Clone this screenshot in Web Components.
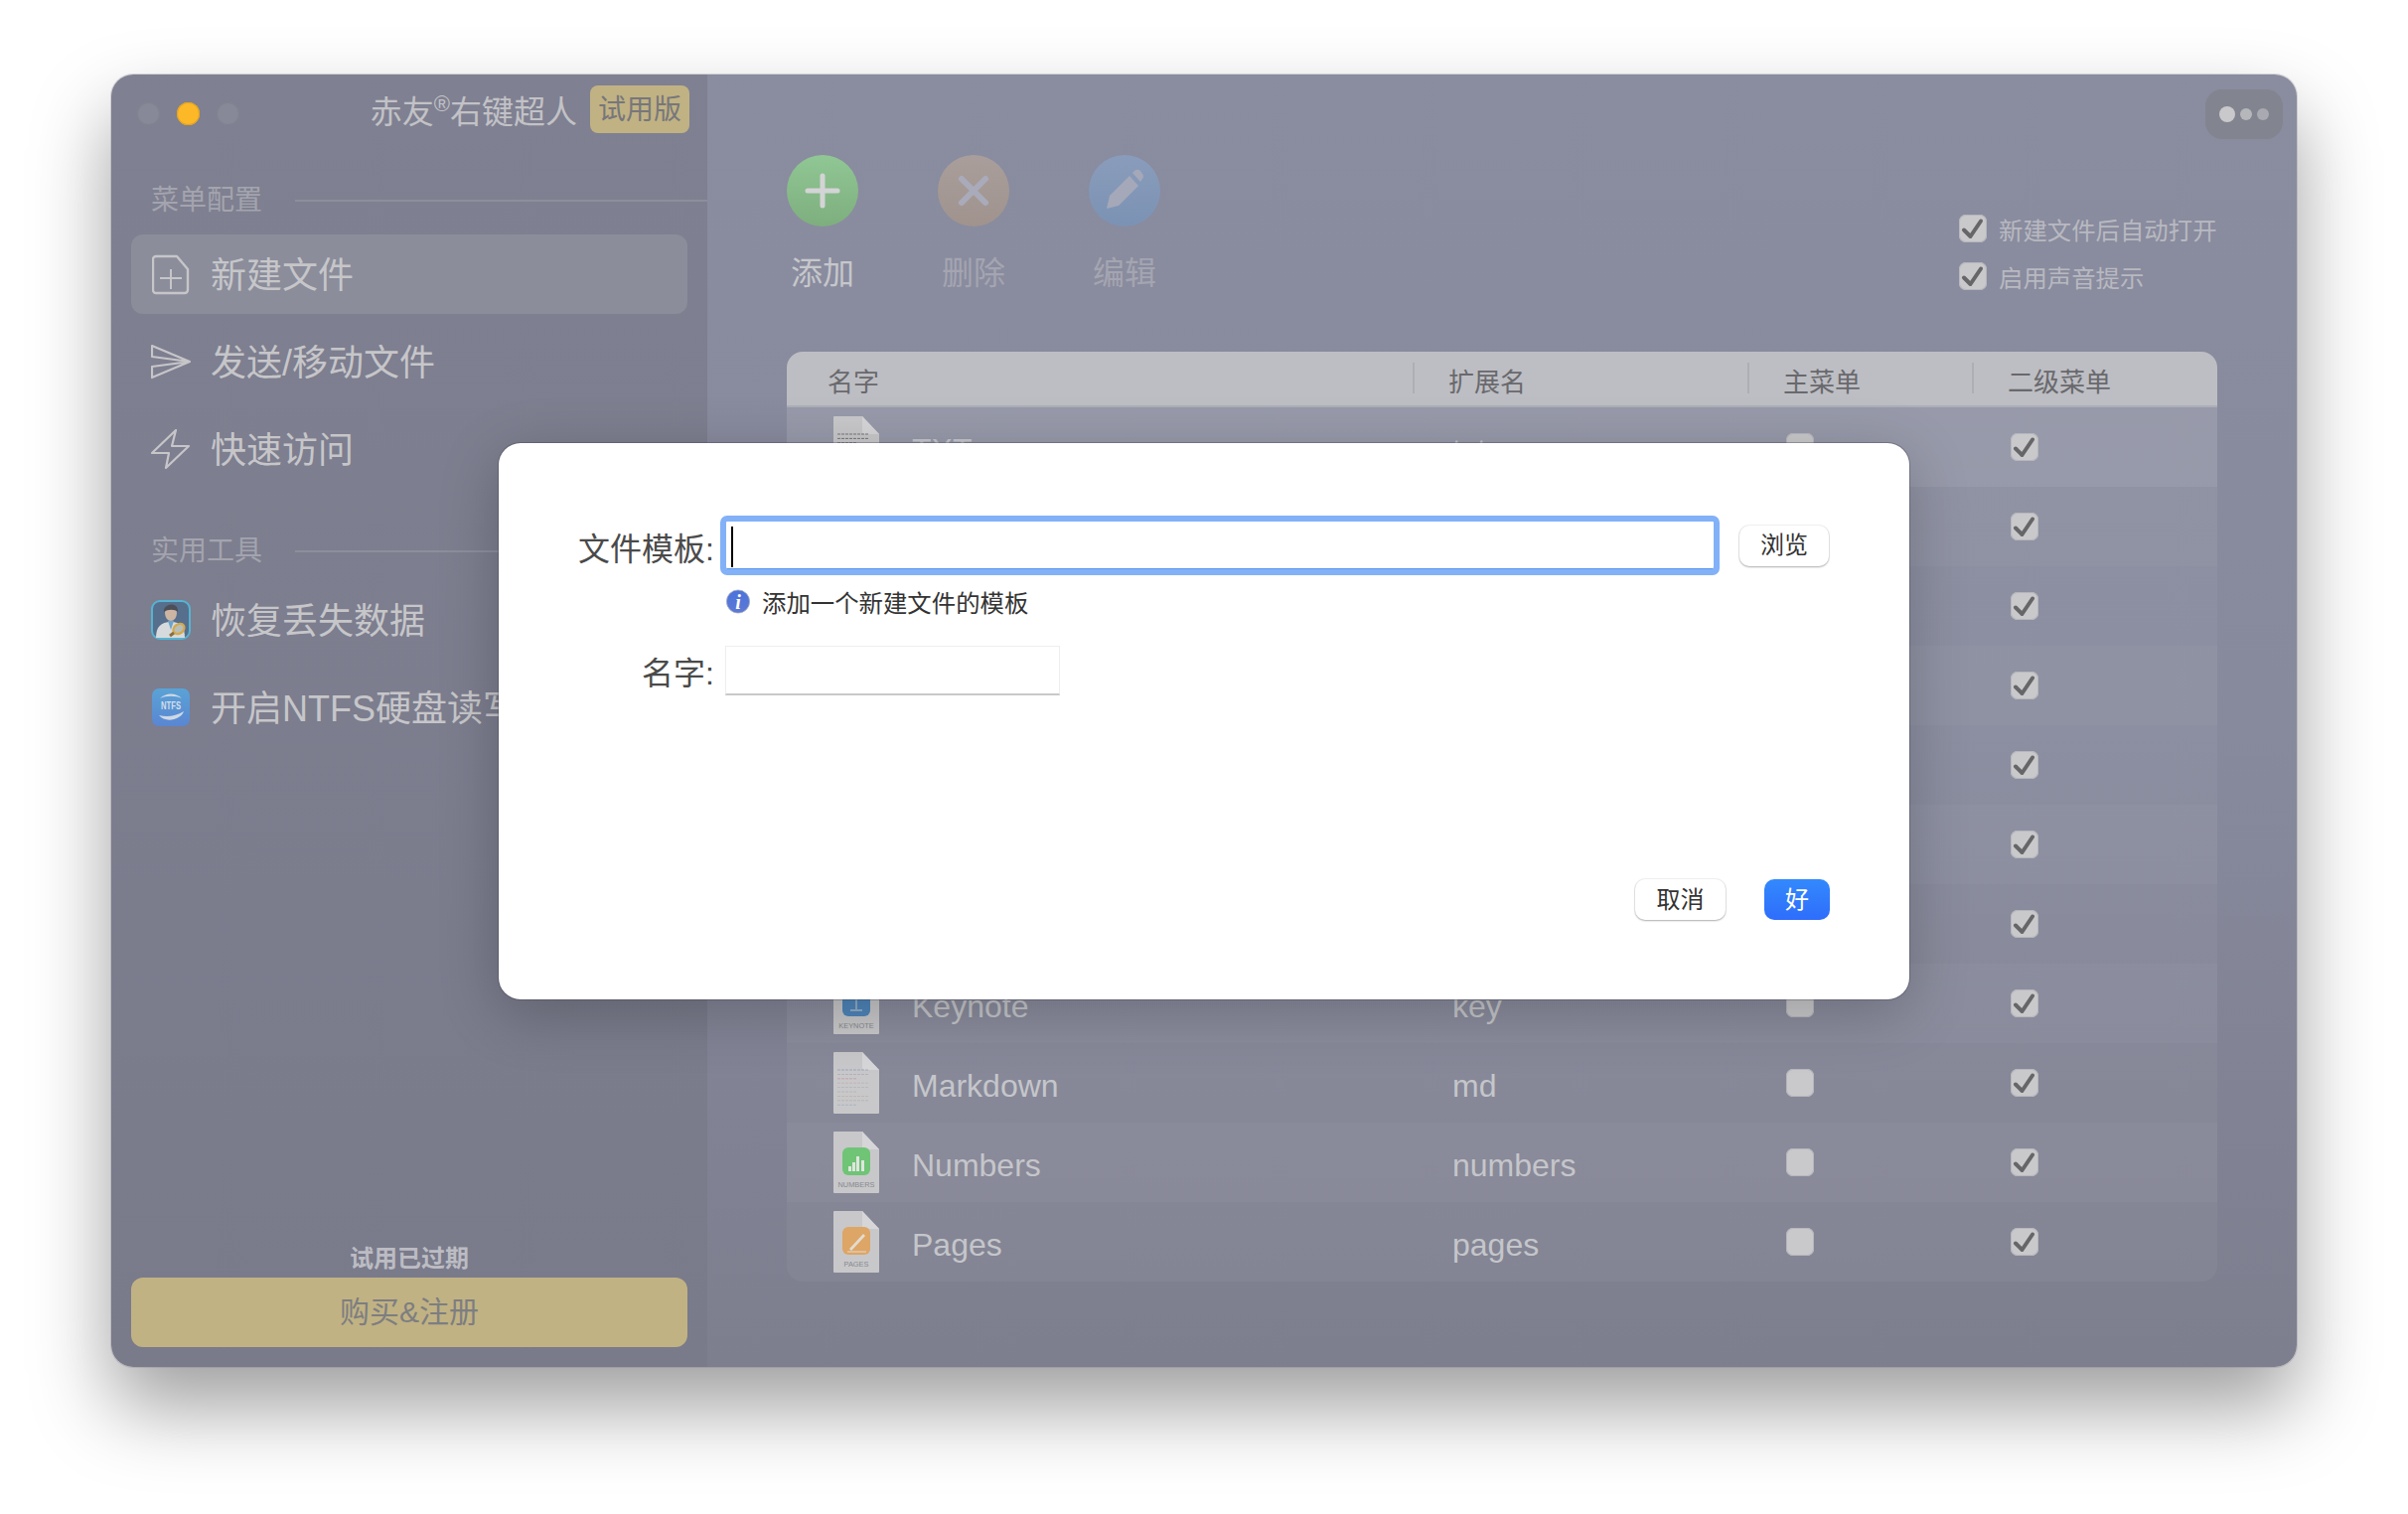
<!DOCTYPE html>
<html lang="zh">
<head>
<meta charset="utf-8">
<title>赤友右键超人</title>
<style>
    html, body { margin: 0; background: #fff; }
    body {
        width: 2424px;
        height: 1524px;
        overflow: hidden;
        box-sizing: border-box;
        padding: 75px 112px 0;
        font-family: "Liberation Sans", "Noto Sans CJK SC", sans-serif;
    }
</style>
</head>
<body>
<app-window></app-window>
<script>
const CHECK = `<svg width="28" height="28" viewBox="0 0 28 28"><path d="M5 15.5l6.5 6.5L22 6.5" fill="none" stroke="var(--tick, #666668)" stroke-width="4" stroke-linecap="round" stroke-linejoin="round"/></svg>`;

class MacCheck extends HTMLElement {
    constructor() {
        super();
        this.attachShadow({ mode: 'open' });
        this.shadowRoot.innerHTML = `
            <style>
                :host {
                    display: block;
                    width: 28px;
                    height: 28px;
                    flex: none;
                    box-sizing: border-box;
                    border-radius: 7px;
                    background: #c9c9cb;
                    box-shadow: inset 0 0 0 1px #b6b7bd;
                }
                svg { display: block; }
            </style>
            ${this.hasAttribute('checked') ? CHECK : ''}
        `;
    }
}
customElements.define('mac-check', MacCheck);

class NavItem extends HTMLElement {
    constructor() {
        super();
        this.attachShadow({ mode: 'open' });
        this.shadowRoot.innerHTML = `
            <style>
                :host {
                    display: flex;
                    align-items: center;
                    gap: 20px;
                    height: 80px;
                    padding-left: 20px;
                    border-radius: 12px;
                    font-size: 36px;
                    color: #c6c6c9;
                    white-space: nowrap;
                }
                :host([selected]) { background: #8b8d9b; }
                .icon { width: 40px; height: 42px; display: flex; align-items: center; justify-content: center; flex: none; }
                .text { padding-bottom: 4px; }
            </style>
            <span class="icon"><slot name="icon"></slot></span>
            <span class="text"><slot></slot></span>
        `;
    }
}
customElements.define('nav-item', NavItem);

class SectionLabel extends HTMLElement {
    constructor() {
        super();
        this.attachShadow({ mode: 'open' });
        this.shadowRoot.innerHTML = `
            <style>
                :host {
                    display: flex;
                    align-items: center;
                    gap: 33px;
                    height: 40px;
                    padding-left: 20px;
                    margin-right: -20px;
                    font-size: 28px;
                    color: #a3a4ae;
                    white-space: nowrap;
                }
                span { padding-bottom: 3px; }
                i { flex: 1; height: 2px; background: #8d8e9c; margin-top: 4px; }
            </style>
            <span><slot></slot></span><i></i>
        `;
    }
}
customElements.define('section-label', SectionLabel);

class SideBar extends HTMLElement {
    constructor() {
        super();
        this.attachShadow({ mode: 'open' });
        this.shadowRoot.innerHTML = `
            <style>
                :host {
                    display: flex;
                    flex-direction: column;
                    width: 600px;
                    flex: none;
                    box-sizing: border-box;
                    padding: 0 20px 20px;
                    background: linear-gradient(#7f8091, #797a8a);
                }
                .title-bar { display: flex; align-items: center; height: 78px; margin-right: -2px; }
                .lights { display: flex; gap: 17px; margin-left: 6px; }
                .lights i { width: 23px; height: 23px; border-radius: 50%; background: #878998; box-shadow: inset 0 0 0 1px #80828f; }
                .lights i.on { background: #fcb827; box-shadow: inset 0 0 0 1px #e2a41f; }
                .title { margin-left: auto; font-size: 32px; color: #c2c2c6; white-space: nowrap; margin-right: 13px; margin-bottom: 8px; }
                .title sup { font-size: 22px; line-height: 0; vertical-align: 12px; }
                .badge {
                    width: 100px;
                    height: 48px;
                    margin-bottom: 8px;
                    border-radius: 8px;
                    background: #c1b283;
                    color: #77777b;
                    font-size: 28px;
                    line-height: 50px;
                    text-align: center;
                }
                .first { margin-top: 27px; margin-bottom: 16px; }
                .second { margin-top: 41px; margin-bottom: 11px; }
                .list { display: flex; flex-direction: column; gap: 8px; }
                .list svg { display: block; }
                .footer { margin-top: auto; }
                .expired { font-size: 24px; font-weight: 700; line-height: 32px; color: #bcbcc3; text-align: center; margin-bottom: 3px; }
                .buy {
                    height: 70px;
                    border-radius: 12px;
                    background: #c1b283;
                    color: #7d7e81;
                    font-size: 30px;
                    line-height: 70px;
                    text-align: center;
                }
            </style>
            <div class="title-bar">
                <div class="lights"><i></i><i class="on"></i><i></i></div>
                <div class="title">赤友<sup>®</sup>右键超人</div>
                <div class="badge">试用版</div>
            </div>
            <section-label class="first">菜单配置</section-label>
            <div class="list">
                <nav-item selected>
                    <svg slot="icon" width="38" height="41" viewBox="0 0 38 41" fill="none" stroke="#c6c6c9" stroke-width="2.4" stroke-linejoin="round"><path d="M4 2h21l11 13v21a3 3 0 0 1-3 3H4a3 3 0 0 1-3-3V5a3 3 0 0 1 3-3z"/><path d="M19 15v20M8 24h22" stroke-width="2"/></svg>
                    新建文件
                </nav-item>
                <nav-item>
                    <svg slot="icon" width="40" height="36" viewBox="0 0 40 36" fill="none" stroke="#c6c6c9" stroke-width="2.2" stroke-linejoin="round"><path d="M1 2l38 16L1 34V23l38-5L1 13z"/></svg>
                    发送/移动文件
                </nav-item>
                <nav-item>
                    <svg slot="icon" width="40" height="42" viewBox="0 0 40 42" fill="none" stroke="#c6c6c9" stroke-width="2.2" stroke-linejoin="round"><path d="M25 2L1 25h17l-3 15 23-22H21z"/></svg>
                    快速访问
                </nav-item>
            </div>
            <section-label class="second">实用工具</section-label>
            <div class="list">
                <nav-item>
                    <svg slot="icon" width="40" height="40" viewBox="0 0 40 40">
                        <rect x="1" y="1" width="38" height="38" rx="8" fill="#566f8c" stroke="#55b4d2" stroke-width="2"/>
                        <path d="M5 38c0-11 5-16 15-16s14 5 14 16z" fill="#d7dadd"/>
                        <path d="M17 21l3 9 3-9z" fill="#6da3cc"/>
                        <ellipse cx="20" cy="13" rx="6" ry="8" fill="#cdb5a3"/>
                        <path d="M13 12c-1-9 15-11 14 0-3-3-10-3-14 0z" fill="#4c4f58"/>
                        <ellipse cx="28" cy="29" rx="6" ry="4.6" transform="rotate(-35 28 29)" fill="#b7bfb8" stroke="#d4a94d" stroke-width="2.2"/>
                        <path d="M23 33l-4 3" stroke="#8a6f3d" stroke-width="3"/>
                    </svg>
                    恢复丢失数据
                </nav-item>
                <nav-item>
                    <svg slot="icon" width="38" height="38" viewBox="0 0 38 38">
                        <defs><linearGradient id="ntfs" x1="0" y1="0" x2="0" y2="1"><stop offset="0" stop-color="#5aa3d6"/><stop offset="1" stop-color="#5a86d2"/></linearGradient></defs>
                        <rect width="38" height="38" rx="7" fill="url(#ntfs)"/>
                        <path d="M8 10c6-6 16-6 22 0-6-3-16-3-22 0zM7 27c8 2 17 1 25-4-3 9-19 12-25 4z" fill="#cfd8e4"/>
                        <text x="19" y="21" text-anchor="middle" font-family="Liberation Sans" font-size="10" font-weight="700" textLength="20" lengthAdjust="spacingAndGlyphs" fill="#d5dde8">NTFS</text>
                    </svg>
                    开启NTFS硬盘读写
                </nav-item>
            </div>
            <div class="footer">
                <div class="expired">试用已过期</div>
                <div class="buy">购买&amp;注册</div>
            </div>
        `;
    }
}
customElements.define('side-bar', SideBar);

class ToolButton extends HTMLElement {
    constructor() {
        super();
        this.attachShadow({ mode: 'open' });
        this.shadowRoot.innerHTML = `
            <style>
                :host {
                    display: flex;
                    flex-direction: column;
                    align-items: center;
                    width: 72px;
                    gap: 25px;
                    font-size: 32px;
                    line-height: 44px;
                    white-space: nowrap;
                    color: var(--label, #a4a5b1);
                }
                .disc { display: block; width: 72px; height: 72px; border-radius: 50%; }
                svg { display: block; }
            </style>
            <span class="disc" style="background: ${this.getAttribute('disc')}"><slot name="glyph"></slot></span>
            <slot></slot>
        `;
    }
}
customElements.define('tool-button', ToolButton);

class FileIcon extends HTMLElement {
    set kind(value) {
        this._kind = value;
        this.render();
    }

    constructor() {
        super();
        this.attachShadow({ mode: 'open' });
    }

    render() {
        const apps = {
            keynote: { color: '#4f86bb', label: 'KEYNOTE', art: '<path d="M23 20v17M17 38h12" stroke="#a8bdd0" stroke-width="1.4" fill="none"/>' },
            numbers: { color: '#6fc476', label: 'NUMBERS', art: '<path d="M18 35h3v5h-3zM22 31h3v9h-3zM26 25h3v15h-3zM31 29h3v11h-3z" transform="translate(-3 0)" fill="#dfe6de"/>' },
            pages: { color: '#dda566', label: 'PAGES', art: '<path d="M16 38l14-15 2 2-14 15z" fill="#e3dccf"/><path d="M14 41h19" stroke="#e3dccf" stroke-width="1"/>' }
        };
        const app = apps[this._kind];
        let inner = '';
        if (app) {
            inner = `<rect x="9" y="16" width="28" height="28" rx="6" fill="${app.color}"/>${app.art}
                <text x="23" y="55.5" text-anchor="middle" font-family="Liberation Sans" font-size="7.4" fill="#87888c">${app.label}</text>`;
        } else {
            const isMd = this._kind === 'md';
            const colors = isMd
                ? ['#7f86b8', '#9a9ab0', '#c77f86', '#b9a8a8', '#a8a8ae', '#a8a8ae', '#b5a88f', '#a8a8ae', '#8fa2b8']
                : ['#77777a', '#77777a', '#77777a', '#77777a', '#77777a', '#77777a', '#77777a', '#77777a', '#77777a'];
            inner = colors.map((c, i) => `<path d="M4 ${18 + i * 4.4}h${i % 3 === 2 ? 20 : 32}" stroke="${c}" stroke-width="${isMd ? 0.7 : 1}" stroke-dasharray="3 1" opacity="${isMd ? 0.75 : 1}"/>`).join('');
        }
        this.shadowRoot.innerHTML = `
            <style>
                :host { display: block; width: 46px; height: 62px; flex: none; }
                svg { display: block; }
            </style>
            <svg width="46" height="62" viewBox="0 0 46 62">
                <path d="M1 0h28l17 18v43a1 1 0 0 1-1 1H1a1 1 0 0 1-1-1V1a1 1 0 0 1 1-1z" fill="#c8c8ca"/>
                <path d="M29 0l17 18H32a3 3 0 0 1-3-3z" fill="#d6d6d8"/>
                ${inner}
            </svg>
        `;
    }
}
customElements.define('file-icon', FileIcon);

class FileRow extends HTMLElement {
    constructor() {
        super();
        this.attachShadow({ mode: 'open' });
    }

    set file(value) {
        this._file = value;
        this.render();
    }

    render() {
        if (!this._file) return;
        const f = this._file;
        this.shadowRoot.innerHTML = `
            <style>
                :host {
                    display: grid;
                    grid-template-columns: 630px 337px 226px 247px;
                    align-items: center;
                    height: 80px;
                    font-size: 32px;
                    color: #c5c6ca;
                    background: rgba(255, 255, 255, 0.045);
                }
                :host(:nth-child(even)) { background: rgba(255, 255, 255, 0.07); }
                :host([selected]) { background: rgba(255, 255, 255, 0.13); }
                .name { display: flex; align-items: center; gap: 33px; padding-left: 47px; }
                .name span { padding-top: 6px; }
                .ext { padding-left: 40px; padding-top: 6px; }
                .box { padding-left: 39px; }
            </style>
            <div class="name">${f.kind ? '<file-icon></file-icon>' : ''}<span>${f.name || ''}</span></div>
            <div class="ext">${f.ext || ''}</div>
            <div class="box"><mac-check></mac-check></div>
            <div class="box"><mac-check checked></mac-check></div>
        `;
        const icon = this.shadowRoot.querySelector('file-icon');
        if (icon) icon.kind = f.kind;
    }
}
customElements.define('file-row', FileRow);

class FileTable extends HTMLElement {
    constructor() {
        super();
        this.attachShadow({ mode: 'open' });
        this.shadowRoot.innerHTML = `
            <style>
                :host { display: block; width: 1440px; border-radius: 16px; overflow: hidden; }
                .head {
                    display: grid;
                    grid-template-columns: 630px 337px 226px 247px;
                    height: 56px;
                    box-sizing: border-box;
                    background: #bdbec3;
                    border-bottom: 2px solid #aeafb6;
                    font-size: 26px;
                    color: #69696d;
                }
                .head div { display: flex; align-items: center; padding-top: 2px; }
                .head div:first-child { padding-left: 41px; }
                .head i { width: 2px; height: 31px; background: #aeafb5; margin: -4px 34px 0 0; }
            </style>
            <div class="head">
                <div>名字</div>
                <div><i></i>扩展名</div>
                <div><i></i>主菜单</div>
                <div><i></i>二级菜单</div>
            </div>
            <div class="body"></div>
        `;
        const files = [
            { name: 'TXT', ext: 'txt', kind: 'txt' },
            {}, {}, {}, {}, {}, {},
            { name: 'Keynote', ext: 'key', kind: 'keynote' },
            { name: 'Markdown', ext: 'md', kind: 'md' },
            { name: 'Numbers', ext: 'numbers', kind: 'numbers' },
            { name: 'Pages', ext: 'pages', kind: 'pages' }
        ];
        const body = this.shadowRoot.querySelector('.body');
        files.forEach((f, i) => {
            const row = document.createElement('file-row');
            if (i === 0) row.setAttribute('selected', '');
            row.file = f;
            body.appendChild(row);
        });
    }
}
customElements.define('file-table', FileTable);

class MacButton extends HTMLElement {
    constructor() {
        super();
        this.attachShadow({ mode: 'open' });
        this.shadowRoot.innerHTML = `
            <style>
                :host {
                    display: block;
                    width: var(--w, 90px);
                    height: 41px;
                    flex: none;
                    box-sizing: border-box;
                    border-radius: 10px;
                    background: #fff;
                    box-shadow: 0 0 0 1px rgba(0, 0, 0, 0.05), 0 1px 2px rgba(0, 0, 0, 0.28);
                    color: #333;
                    font-size: 24px;
                    line-height: var(--lh, 40px);
                    text-align: center;
                }
                :host([primary]) {
                    background: linear-gradient(#3389fd, #2e6dfb);
                    box-shadow: none;
                    color: #fff;
                }
            </style>
            <slot></slot>
        `;
    }
}
customElements.define('mac-button', MacButton);

class SheetDialog extends HTMLElement {
    constructor() {
        super();
        this.attachShadow({ mode: 'open' });
        this.shadowRoot.innerHTML = `
            <style>
                :host {
                    position: absolute;
                    left: 390px;
                    top: 371px;
                    width: 1420px;
                    height: 560px;
                    box-sizing: border-box;
                    display: flex;
                    flex-direction: column;
                    padding-top: 73px;
                    background: #fff;
                    border-radius: 22px;
                    box-shadow: 0 0 0 1px rgba(60, 60, 80, 0.35), 0 14px 60px rgba(0, 0, 0, 0.22);
                    color: #333;
                }
                .row { display: flex; align-items: center; }
                label {
                    width: 217px;
                    flex: none;
                    text-align: right;
                    font-size: 32px;
                    line-height: 44px;
                    color: #4a4a4a;
                    padding-top: 7px;
                }
                .ring {
                    width: 1006px;
                    height: 60px;
                    margin: 0 20px 0 6px;
                    box-sizing: border-box;
                    border: 6px solid #82b1f8;
                    border-radius: 7px;
                    box-shadow: inset 0 -1px 0 #5b95ec;
                    background: #fff;
                    padding: 5px 0 0 5px;
                }
                .caret { display: block; width: 2px; height: 41px; background: #000; }
                .hint {
                    display: flex;
                    align-items: center;
                    gap: 12px;
                    height: 30px;
                    margin: 11px 0 29px 229px;
                    font-size: 24.4px;
                    color: #333;
                }
                .hint svg { display: block; }
                .name {
                    width: 337px;
                    height: 50px;
                    margin-left: 11px;
                    box-sizing: border-box;
                    border: 1px solid #eeeeee;
                    border-bottom: 2px solid #c9c9c9;
                    background: #fff;
                }
                .actions {
                    display: flex;
                    justify-content: flex-end;
                    gap: 39px;
                    margin-top: auto;
                    padding: 0 80px 80px 0;
                }
            </style>
            <div class="row">
                <label>文件模板:</label>
                <div class="ring"><span class="caret"></span></div>
                <mac-button>浏览</mac-button>
            </div>
            <div class="hint">
                <svg width="24" height="25" viewBox="0 0 24 25">
                    <defs><linearGradient id="inf" x1="0" y1="0" x2="0" y2="1"><stop offset="0" stop-color="#4a73dc"/><stop offset="1" stop-color="#5d79d4"/></linearGradient></defs>
                    <circle cx="12" cy="12.5" r="11.6" fill="url(#inf)" stroke="#a9b0c2" stroke-width="0.8"/>
                    <text x="12" y="20" text-anchor="middle" font-family="Liberation Serif" font-style="italic" font-weight="700" font-size="20" fill="#fff">i</text>
                </svg>
                添加一个新建文件的模板
            </div>
            <div class="row">
                <label>名字:</label>
                <div class="name"></div>
            </div>
            <div class="actions">
                <mac-button style="--w: 91px; --lh: 42px">取消</mac-button>
                <mac-button primary style="--w: 66px; --lh: 42px">好</mac-button>
            </div>
        `;
    }
}
customElements.define('sheet-dialog', SheetDialog);

class MainPane extends HTMLElement {
    constructor() {
        super();
        this.attachShadow({ mode: 'open' });
        this.shadowRoot.innerHTML = `
            <style>
                :host {
                    display: block;
                    flex: 1;
                    box-sizing: border-box;
                    padding: 15px 14px 0 80px;
                    background: linear-gradient(#8a8c9f 0%, #878a9d 50%, #7d7e8e 100%);
                }
                .more-row { display: flex; justify-content: flex-end; height: 50px; margin-bottom: 16px; }
                .more {
                    display: flex;
                    align-items: center;
                    justify-content: center;
                    gap: 5px;
                    width: 78px;
                    border-radius: 17px;
                    background: #82848f;
                }
                .more i { width: 12px; height: 12px; border-radius: 50%; background: #a9aab1; }
                .more i:nth-child(1) { width: 16px; height: 16px; background: #c9c9cc; }
                .more i:nth-child(2) { background: #b6b7bb; }
                .toolbar {
                    display: flex;
                    justify-content: space-between;
                    height: 198px;
                    margin-right: 66px;
                }
                .tools { display: flex; gap: 80px; }
                .tools svg { display: block; }
                .options {
                    display: flex;
                    flex-direction: column;
                    gap: 20px;
                    width: 260px;
                    margin-top: 60px;
                    font-size: 24.4px;
                    color: #b8b9c0;
                    white-space: nowrap;
                }
                .options div { display: flex; align-items: center; gap: 12px; height: 28px; }
            </style>
            <div class="more-row"><div class="more"><i></i><i></i><i></i></div></div>
            <div class="toolbar">
                <div class="tools">
                    <tool-button style="--label: #c6c7cb" disc="linear-gradient(#90c794, #7eae7e)">
                        <svg slot="glyph" width="72" height="72" viewBox="0 0 72 72"><path d="M36 21v30M21 36h30" stroke="#d3d4d6" stroke-width="5" stroke-linecap="round"/></svg>
                        添加
                    </tool-button>
                    <tool-button disc="linear-gradient(#a99e9b, #a0938e)">
                        <svg slot="glyph" width="72" height="72" viewBox="0 0 72 72"><path d="M24 24l24 24M48 24L24 48" stroke="#a9abbb" stroke-width="6" stroke-linecap="round"/></svg>
                        删除
                    </tool-button>
                    <tool-button disc="linear-gradient(#8a9cbb, #7b92b4)">
                        <svg slot="glyph" width="72" height="72" viewBox="0 0 72 72"><path d="M18 54l3-13 20-20 9 10-20 20zM44 18l2-2a4 4 0 0 1 6 0l2 3a4 4 0 0 1 0 5l-2 3z" fill="#a5a8b8"/></svg>
                        编辑
                    </tool-button>
                </div>
                <div class="options">
                    <div><mac-check checked></mac-check>新建文件后自动打开</div>
                    <div><mac-check checked></mac-check>启用声音提示</div>
                </div>
            </div>
            <file-table></file-table>
        `;
    }
}
customElements.define('main-pane', MainPane);

class AppWindow extends HTMLElement {
    constructor() {
        super();
        this.attachShadow({ mode: 'open' });
        this.shadowRoot.innerHTML = `
            <style>
                :host {
                    position: relative;
                    display: flex;
                    width: 2200px;
                    height: 1301px;
                    border-radius: 22px;
                    box-shadow: 0 0 0 1px rgba(120, 120, 130, 0.25), 0 40px 80px rgba(0, 0, 0, 0.38);
                }
                .clip { display: flex; width: 100%; height: 100%; border-radius: 22px; overflow: hidden; }
            </style>
            <div class="clip">
                <side-bar></side-bar>
                <main-pane></main-pane>
            </div>
            <sheet-dialog></sheet-dialog>
        `;
    }
}
customElements.define('app-window', AppWindow);
</script>
</body>
</html>
